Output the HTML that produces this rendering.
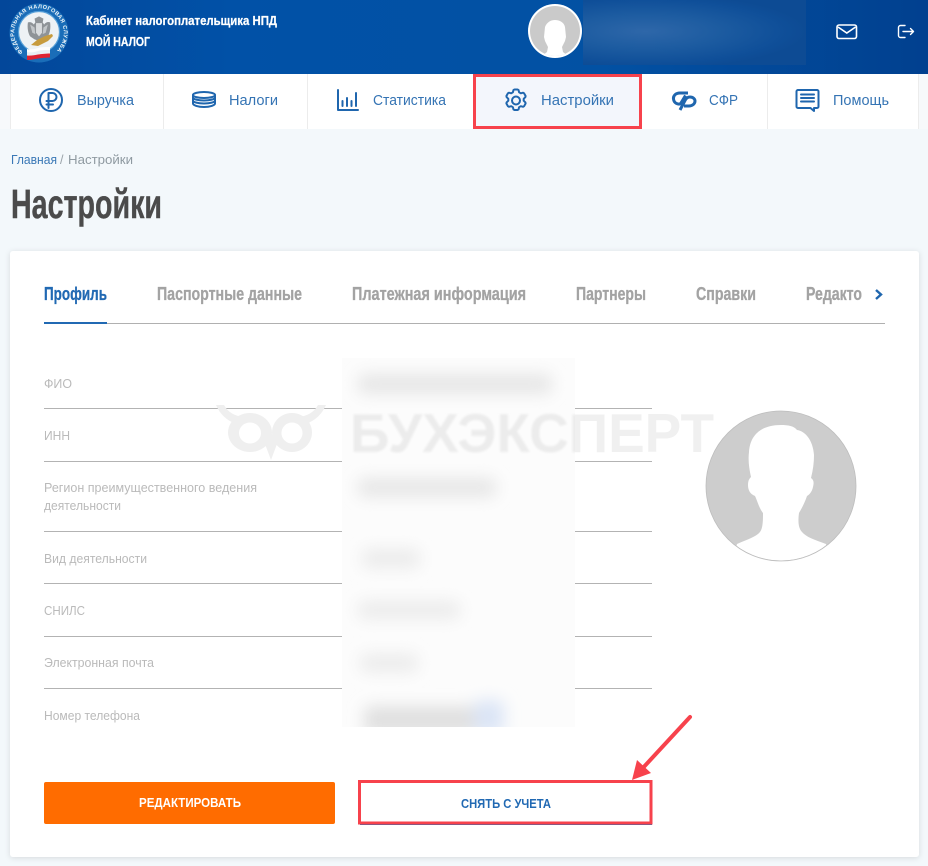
<!DOCTYPE html>
<html lang="ru">
<head>
<meta charset="utf-8">
<title>Настройки</title>
<style>
html,body{margin:0;padding:0;width:928px;height:866px;overflow:hidden;background:#f3f8fb}
svg{position:absolute;left:0;top:0;display:block}
text{font-family:"Liberation Sans",sans-serif}
.nav{font-size:15px;fill:#3574b4}
.lab{font-size:12.5px;fill:#bababa}
.tab{font-size:18px;font-weight:700;fill:#a3a3a3;stroke:#a3a3a3;stroke-width:.3px}
.ic{fill:none;stroke:#1f66ae;stroke-width:2;stroke-linecap:round;stroke-linejoin:round}
</style>
</head>
<body>
<svg width="928" height="866" viewBox="0 0 928 866" xmlns="http://www.w3.org/2000/svg">
<defs>
<linearGradient id="hd" x1="0" y1="0" x2="1" y2="0"><stop offset="0" stop-color="#03479a"/><stop offset=".25" stop-color="#0151a7"/><stop offset=".65" stop-color="#0251a3"/><stop offset="1" stop-color="#01408f"/></linearGradient>
<radialGradient id="glow" cx=".28" cy=".48" r=".72" gradientTransform="translate(0 .1) scale(1 .8)"><stop offset="0" stop-color="#2e67a9"/><stop offset=".45" stop-color="#1d5ca1"/><stop offset=".85" stop-color="#0f4f99"/><stop offset="1" stop-color="#0d4b94"/></radialGradient>
<filter id="b0" x="-5%" y="-5%" width="110%" height="110%"><feGaussianBlur stdDeviation="1"/></filter>
<filter id="b1" x="-40%" y="-40%" width="180%" height="180%"><feGaussianBlur stdDeviation="8"/></filter>
<filter id="bl" x="-5%" y="-5%" width="110%" height="110%"><feGaussianBlur stdDeviation=".35"/></filter>
<filter id="sh" x="-5%" y="-5%" width="110%" height="110%"><feDropShadow dx="0" dy="1" stdDeviation="3" flood-color="#000" flood-opacity=".12"/></filter>
<clipPath id="av"><circle cx="781" cy="486" r="74.5"/></clipPath>
<clipPath id="av2"><circle cx="555" cy="31" r="25"/></clipPath>
<clipPath id="tabc"><rect x="800" y="275" width="64" height="40"/></clipPath>
<clipPath id="blurc"><rect x="342" y="358" width="240" height="369"/></clipPath>
<clipPath id="wmIn"><rect x="342" y="400" width="233" height="60"/></clipPath>
<clipPath id="wmOut"><rect x="575" y="400" width="160" height="60"/></clipPath>
<path id="ring" d="M23 52A24.800 24.800 0 1 1 55 52"/>
</defs>

<!-- header -->
<rect width="928" height="74" fill="url(#hd)"/>
<rect x="583" y="0" width="223" height="65" fill="url(#glow)"/>

<!-- logo -->
<circle cx="39" cy="33" r="29.500" fill="#1a6db8"/>
<circle cx="39" cy="32" r="20.500" fill="#eef2f5" stroke="#58a0d8" stroke-width="1.200"/>
<text font-size="5.500" font-weight="700" fill="#f2f7fb"><textPath href="#ring" textLength="118" lengthAdjust="spacing">ФЕДЕРАЛЬНАЯ НАЛОГОВАЯ СЛУЖБА</textPath></text>
<g filter="url(#bl)">
<g transform="translate(39 29) scale(.74) translate(-39 -29)">
<path d="M24 20c3-1 6 0 8 3l2-3-1-5 6-3 6 3-1 5 2 3c2-3 5-4 8-3 1 7 0 14-3 19l-6 4-6 2-6-2-6-4c-3-5-4-12-3-19z" fill="#8e9397"/>
<path d="M27 23l6 4 1 9-4-2zM51 23l-6 4-1 9 4-2z" fill="#c2c6c9"/>
<path d="M35 21h8v13l-4 5-4-5z" fill="#d9dcde"/>
</g>
<path d="M31 45l6-5 8-4 7-2 1 2-5 5-6 3-4 2z" fill="#c79b3e"/>
<path d="M27 49c4 1 8 0 11-1s8-1 12-1v5c-4 0-8 0-12 1s-7 2-11 1z" fill="#fdfdfd"/>
<path d="M27 52c4 1 8 0 11-1s8-1 12-1v5c-4 0-8 0-12 1s-7 2-11 1z" fill="#e8eef4"/>
<path d="M27 55.500c4 .5 8-.5 11-1s8-.9 12-1v4c-4 0-8 .5-12 1s-7 1.500-11 1.500z" fill="#dd2330"/>
</g>

<text x="86" y="25" font-size="13" font-weight="700" fill="#fff" stroke="#fff" stroke-width=".25" textLength="191" lengthAdjust="spacingAndGlyphs">Кабинет налогоплательщика НПД</text>
<text x="86" y="46" font-size="13" font-weight="700" fill="#fff" stroke="#fff" stroke-width=".25" textLength="64" lengthAdjust="spacingAndGlyphs">МОЙ НАЛОГ</text>

<!-- header avatar -->
<circle cx="555" cy="31" r="27" fill="#fff"/>
<circle cx="555" cy="31" r="25" fill="#cacaca"/>
<path d="M537 60l10-8 1-5-3-6-1-4 1-10c2-5 6-7 10-7s9 2 10 7l1 10-1 4-3 6 1 5 10 8z" fill="#fff" clip-path="url(#av2)"/>

<!-- header icons -->
<rect x="837" y="25" width="19.500" height="13.500" rx="2" fill="none" stroke="#fff" stroke-width="1.600"/>
<path d="M838 27l8.800 6 8.800-6" fill="none" stroke="#fff" stroke-width="1.600"/>
<path d="M905 25.500h-4.500a2 2 0 0 0-2 2v8a2 2 0 0 0 2 2h4.500M903 31.500h10.500M910.500 28.500l3 3-3 3" fill="none" stroke="#fff" stroke-width="1.400" stroke-linecap="round" stroke-linejoin="round"/>

<!-- nav -->
<rect y="74" width="928" height="55" fill="#fff"/>
<rect x="0" y="74" width="10" height="55" fill="#f7f9fb"/>
<rect x="919" y="74" width="9" height="55" fill="#f7f9fb"/>
<g fill="#ececec">
<rect x="10" y="74" width="1" height="55"/><rect x="163" y="74" width="1" height="55"/><rect x="307" y="74" width="1" height="55"/>
<rect x="767" y="74" width="1" height="55"/><rect x="918" y="74" width="1" height="55"/>
</g>
<rect x="474.500" y="75.500" width="166" height="52" fill="#f3f6fc" stroke="#f7424c" stroke-width="3"/>

<!-- rub icon -->
<circle cx="51" cy="100" r="11" class="ic"/>
<path d="M48.500 108v-15h4a4 4 0 0 1 0 8h-6M46.500 104.500h6.500" class="ic" stroke-width="1.800"/>
<text x="77" y="105" class="nav" textLength="57" lengthAdjust="spacingAndGlyphs">Выручка</text>

<!-- coins -->
<ellipse cx="204" cy="95" rx="11" ry="3" class="ic"/>
<path d="M193 95v2.500c0 1.700 5 3 11 3s11-1.300 11-3V95M193 97.500v3c0 1.700 5 3 11 3s11-1.300 11-3v-3M193 100.500v3c0 1.700 5 3.500 11 3.500s11-1.800 11-3.500v-3" class="ic"/>
<text x="229" y="105" class="nav" textLength="49" lengthAdjust="spacingAndGlyphs">Налоги</text>

<!-- stats -->
<path d="M338 90v20h20" class="ic"/>
<path d="M342.500 106v-5M347 106v-8M351.500 106v-5M356 106V93" class="ic"/>
<text x="373" y="105" class="nav" textLength="73" lengthAdjust="spacingAndGlyphs">Статистика</text>

<!-- gear -->
<circle cx="516" cy="100.500" r="4" class="ic"/>
<path d="M513.500 90l1-0.500h3l1 .5.600 2.300 1.700 1 2.300-.6 1 .6 1.500 2.700-.2 1.100-1.700 1.700v1.900l1.700 1.700.2 1.100-1.500 2.700-1 .6-2.300-.6-1.700 1-.6 2.300-1 .5h-3l-1-.5-.6-2.300-1.700-1-2.300.6-1-.6-1.500-2.700.2-1.100 1.700-1.700v-1.900l-1.700-1.700-.2-1.100 1.500-2.700 1-.6 2.300.6 1.700-1z" class="ic" stroke-width="1.800"/>
<text x="541" y="105" class="nav" textLength="73" lengthAdjust="spacingAndGlyphs">Настройки</text>

<!-- sfr -->
<path d="M688 93H680C675.500 93 673 96 673.500 99C674 103 677.500 104.800 680.500 103.800L685.500 95.500" fill="none" stroke="#1f66ae" stroke-width="3"/>
<path d="M680 110L685 100.500C686 98.500 688 97 690 97C693 97 695 99 695 101C695 104 692 106 689 106H684" fill="none" stroke="#1f66ae" stroke-width="3"/>
<text x="709" y="105" class="nav" textLength="29" lengthAdjust="spacingAndGlyphs">СФР</text>

<!-- help -->
<path d="M798 90h19a1.500 1.500 0 0 1 1.500 1.500v15a1.500 1.500 0 0 1-1.500 1.500h-3v3l-3.500-3H798a1.500 1.500 0 0 1-1.500-1.500v-15A1.500 1.500 0 0 1 798 90z" class="ic"/>
<path d="M801 94.500h13M801 98h13M801 101.500h13" class="ic" stroke-width="1.800"/>
<text x="833" y="105" class="nav" textLength="56" lengthAdjust="spacingAndGlyphs">Помощь</text>

<!-- breadcrumb + heading -->
<text x="11" y="164" font-size="12.500" fill="#3a78b6" textLength="46" lengthAdjust="spacingAndGlyphs">Главная</text>
<text x="60" y="164" font-size="12.500" fill="#99a2a8">/</text>
<text x="68" y="164" font-size="12.500" fill="#8f9aa1" textLength="65" lengthAdjust="spacingAndGlyphs">Настройки</text>
<text x="11" y="218" font-size="41" font-weight="700" fill="#4b4b4b" stroke="#4b4b4b" stroke-width=".4" textLength="151" lengthAdjust="spacingAndGlyphs">Настройки</text>

<!-- card -->
<rect x="10" y="251" width="909" height="606" rx="3" fill="#fff" filter="url(#sh)"/>

<!-- tabs -->
<text x="44" y="300" class="tab" style="fill:#2169b3;stroke:#2169b3" textLength="63" lengthAdjust="spacingAndGlyphs">Профиль</text>
<text x="157" y="300" class="tab" textLength="145" lengthAdjust="spacingAndGlyphs">Паспортные данные</text>
<text x="352" y="300" class="tab" textLength="174" lengthAdjust="spacingAndGlyphs">Платежная информация</text>
<text x="576" y="300" class="tab" textLength="70" lengthAdjust="spacingAndGlyphs">Партнеры</text>
<text x="696" y="300" class="tab" textLength="60" lengthAdjust="spacingAndGlyphs">Справки</text>
<g clip-path="url(#tabc)"><text x="806" y="300" class="tab" textLength="56" lengthAdjust="spacingAndGlyphs">Редакто</text></g>
<path d="M876 290l5 4.500-5 4.500" fill="none" stroke="#1f66ae" stroke-width="2.400"/>
<rect x="44" y="323" width="841" height="1" fill="#b0b0b0"/>
<rect x="44" y="322" width="63" height="2" fill="#2169b3"/>

<!-- field lines -->
<g fill="#b3b3b3">
<rect x="44" y="408" width="608" height="1"/><rect x="44" y="461" width="608" height="1"/><rect x="44" y="531" width="608" height="1"/>
<rect x="44" y="583" width="608" height="1"/><rect x="44" y="636" width="608" height="1"/><rect x="44" y="688" width="608" height="1"/>
</g>

<!-- watermark owl -->
<path fill="#efefef" fill-rule="evenodd" d="M250 413a22 19.500 0 1 0 0.010 0zM250 422.500a11 10.500 0 1 1-0.010 0zM292 413a20 19.500 0 1 0 0.010 0zM292 422.500a10.500 10.500 0 1 1-0.010 0z"/>
<path fill="#efefef" d="M216 405H224C228 412 234 416 244 417L236 424C226 420 220 414 216 405ZM326 405H318C314 412 308 416 298 417L306 424C316 420 322 414 326 405ZM265 444L271 460L277 444L271 432Z"/>

<!-- blur mask -->
<rect x="342" y="358" width="233" height="369" fill="#fcfcfc"/>
<g clip-path="url(#wmIn)"><text x="350" y="452" font-size="55" font-weight="700" fill="#ececec" filter="url(#b0)" textLength="364" lengthAdjust="spacingAndGlyphs">БУХЭКСПЕРТ</text></g>
<g clip-path="url(#wmOut)"><text x="350" y="452" font-size="55" font-weight="700" fill="#f0f0f0" textLength="364" lengthAdjust="spacingAndGlyphs">БУХЭКСПЕРТ</text></g>
<g clip-path="url(#blurc)">
<g filter="url(#b1)">
<rect x="358" y="374" width="194" height="20" rx="6" fill="#e6e6e6"/>
<rect x="358" y="478" width="138" height="19" rx="6" fill="#e6e6e6"/>
<rect x="362" y="549" width="58" height="19" rx="6" fill="#ebebeb"/>
<rect x="358" y="601" width="102" height="18" rx="6" fill="#ebebeb"/>
<rect x="360" y="654" width="58" height="18" rx="6" fill="#ebebeb"/>
<rect x="364" y="706" width="114" height="28" rx="6" fill="#e0e0e0"/>
<rect x="474" y="700" width="30" height="34" rx="6" fill="#dbe5f6"/>
</g>
</g>

<!-- labels -->
<text x="44" y="388" class="lab" textLength="28" lengthAdjust="spacingAndGlyphs">ФИО</text>
<text x="44" y="440" class="lab" textLength="26" lengthAdjust="spacingAndGlyphs">ИНН</text>
<text x="44" y="492" class="lab" textLength="213" lengthAdjust="spacingAndGlyphs">Регион преимущественного ведения</text>
<text x="44" y="510" class="lab" textLength="77" lengthAdjust="spacingAndGlyphs">деятельности</text>
<text x="44" y="563" class="lab" textLength="103" lengthAdjust="spacingAndGlyphs">Вид деятельности</text>
<text x="44" y="615" class="lab" textLength="41" lengthAdjust="spacingAndGlyphs">СНИЛС</text>
<text x="44" y="667" class="lab" textLength="110" lengthAdjust="spacingAndGlyphs">Электронная почта</text>
<text x="44" y="720" class="lab" textLength="96" lengthAdjust="spacingAndGlyphs">Номер телефона</text>

<!-- avatar -->
<circle cx="781" cy="486" r="75" fill="#cdcdcd"/>
<path clip-path="url(#av)" d="M730 570L737 544C748 539 756 537 760 532C763 528 763 520 763 513C759 508 757 500 755 496C750 494 748 490 748 485C748 481 749 479 751 477C749 468 748 460 749 452C750 436 760 425 781 425C788 425 794 426 797 430C805 431 813 440 814 455C814 463 813 470 811 478C814 480 814 483 813 487C812 492 809 495 807 496C805 502 802 508 799 513C798 520 798 528 802 532C806 537 815 540 826 544L832 570Z" fill="#fff"/>
<circle cx="781" cy="486" r="75" fill="none" stroke="#bdbdbd" stroke-width=".8"/>

<!-- buttons -->
<rect x="44" y="782" width="291" height="42" rx="2" fill="#ff6c00"/>
<text x="139" y="807" font-size="13" font-weight="700" fill="#fff" textLength="102" lengthAdjust="spacingAndGlyphs">РЕДАКТИРОВАТЬ</text>
<rect x="360" y="782" width="292" height="43" fill="#2169b3"/>
<rect x="359.500" y="781.500" width="291.500" height="41.500" fill="#fff" stroke="#f7424c" stroke-width="3"/>
<text x="461" y="808" font-size="13" font-weight="700" fill="#2169b3" textLength="90" lengthAdjust="spacingAndGlyphs">СНЯТЬ С УЧЕТА</text>

<!-- arrow -->
<path d="M690 717L641 770" fill="none" stroke="#f7424c" stroke-width="4" stroke-linecap="round"/>
<path d="M632 780L637 760L651 773Z" fill="#f7424c"/>
</svg>
</body>
</html>
